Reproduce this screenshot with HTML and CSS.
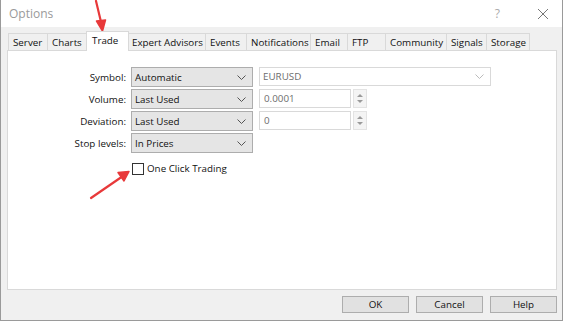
FILE: index.html
```html
<!DOCTYPE html>
<html>
<head>
<meta charset="utf-8">
<link rel="stylesheet" href="styles.css">
</head>
<body>
<div class="window">
  <div class="titlebar">
    <span class="title">Options</span>
    <span class="help">?</span>
    <span class="close">
      <svg width="12" height="12" viewBox="0 0 12 12"><path d="M1 1L11 11M11 1L1 11" stroke="#777" stroke-width="1"/></svg>
    </span>
  </div>
  <div class="body">
    <div class="tabs">
      <div class="tab t-server">Server</div>
      <div class="tab t-charts">Charts</div>
      <div class="tab active t-trade">Trade</div>
      <div class="tab t-ea">Expert Advisors</div>
      <div class="tab t-events">Events</div>
      <div class="tab t-notif">Notifications</div>
      <div class="tab t-email">Email</div>
      <div class="tab t-ftp">FTP</div>
      <div class="tab t-comm">Community</div>
      <div class="tab t-signals">Signals</div>
      <div class="tab t-storage">Storage</div>
    </div>
    <div class="panel">
      <div class="form">
        <div class="label">Symbol:</div>
        <div class="select"><span>Automatic</span><svg class="chev" width="9" height="5" viewBox="0 0 9 5"><path d="M0.5 0.5L4.5 4.5L8.5 0.5" fill="none" stroke="#555"/></svg></div>
        <div class="select wide disabled"><span>EURUSD</span><svg class="chev" width="9" height="5" viewBox="0 0 9 5"><path d="M0.5 0.5L4.5 4.5L8.5 0.5" fill="none" stroke="#bbb"/></svg></div>

        <div class="label">Volume:</div>
        <div class="select"><span>Last Used</span><svg class="chev" width="9" height="5" viewBox="0 0 9 5"><path d="M0.5 0.5L4.5 4.5L8.5 0.5" fill="none" stroke="#555"/></svg></div>
        <div class="numrow">
          <div class="input">0.0001</div>
          <div class="spin"><span class="up"></span><span class="down"></span></div>
        </div>

        <div class="label">Deviation:</div>
        <div class="select"><span>Last Used</span><svg class="chev" width="9" height="5" viewBox="0 0 9 5"><path d="M0.5 0.5L4.5 4.5L8.5 0.5" fill="none" stroke="#555"/></svg></div>
        <div class="numrow">
          <div class="input">0</div>
          <div class="spin"><span class="up"></span><span class="down"></span></div>
        </div>

        <div class="label">Stop levels:</div>
        <div class="select"><span>In Prices</span><svg class="chev" width="9" height="5" viewBox="0 0 9 5"><path d="M0.5 0.5L4.5 4.5L8.5 0.5" fill="none" stroke="#555"/></svg></div>
        <div></div>
      </div>
      <label class="check"><span class="box"></span><span>One Click Trading</span></label>
    </div>
    <div class="buttons">
      <div class="btn">OK</div>
      <div class="btn">Cancel</div>
      <div class="btn">Help</div>
    </div>
  </div>
  <svg class="arrows" width="563" height="321" viewBox="0 0 563 321">
    <path d="M95 1L100.5 24" stroke="#e8393a" stroke-width="2.2" stroke-linecap="round"/>
    <path d="M95.5 21L101.5 31L104.5 20Z" fill="#e8393a" stroke="#e8393a" stroke-width="1.5" stroke-linejoin="round"/>
    <path d="M90 198L122 176" stroke="#e8393a" stroke-width="2.2" stroke-linecap="round"/>
    <path d="M117 172.5L128 171.5L123 181Z" fill="#e8393a" stroke="#e8393a" stroke-width="1.5" stroke-linejoin="round"/>
  </svg>
</div>
</body>
</html>
```
FILE: styles.css
```css
* { box-sizing: border-box; }
html, body { margin: 0; padding: 0; background: #ffffff; }
body {
  font-family: "Open Sans", "Noto Sans", sans-serif;
  font-size: 9.8px;
  color: #111;
}
.window {
  position: relative;
  width: 563px;
  height: 321px;
  border-left: 1px solid #9a9a9a;
  border-right: 1px solid #9a9a9a;
  border-bottom: 1px solid #9a9a9a;
  background: #f0f0f0;
  display: flex;
  flex-direction: column;
  overflow: hidden;
}
.titlebar {
  height: 27px;
  background: #ffffff;
  display: flex;
  align-items: center;
  padding-left: 8px;
  flex: none;
}
.title { font-size: 12px; color: #9a9a9a; flex: 1; }
.help { color: #aaa; font-size: 12px; margin-right: 37px; }
.close { width: 12px; height: 12px; margin-right: 13px; display: flex; }
.body { flex: 1; display: flex; flex-direction: column; padding: 0 5px 0 6px; }
.tabs {
  display: flex;
  margin-top: 6px;
  padding-left: 1px;
  height: 17px;
  align-items: flex-end;
}
.tab {
  height: 17px;
  padding: 0 0 0 4px;
  border: 1px solid #d9d9d9;
  border-bottom: none;
  border-left: none;
  background: #f0f0f0;
  display: flex;
  align-items: center;
  white-space: nowrap;
}
.tab:first-child { border-left: 1px solid #d9d9d9; }
.t-server { width: 40px; }
.t-charts { width: 39px; }
.t-ea { width: 78px; }
.t-events { width: 41px; }
.t-notif { width: 64px; }
.t-email { width: 37px; }
.t-ftp { width: 38px; }
.t-comm { width: 61px; }
.t-signals { width: 40px; }
.t-storage { width: 43px; }
.tab.active {
  width: 43px;
  height: 20px;
  margin-bottom: -1px;
  background: #ffffff;
  border-left: 1px solid #d9d9d9;
  margin-left: -1px;
  margin-right: -1px;
  padding: 0 0 2px 5px;
  position: relative;
  z-index: 1;
}
.panel {
  height: 240px;
  background: #ffffff;
  border: 1px solid #d9d9d9;
  padding-top: 16px;
}
.form {
  display: grid;
  grid-template-columns: 118px 122px 233px;
  column-gap: 5px;
  row-gap: 2px;
  grid-auto-rows: 20px;
}
.form > :nth-child(3n) { margin-left: 1px; }
.label {
  text-align: right;
  align-self: center;
}
.select {
  border: 1px solid #adadad;
  background: #e5e5e5;
  display: flex;
  align-items: center;
  justify-content: space-between;
  padding: 0 6px 0 3px;
}
.select.disabled {
  background: #ffffff;
  border-color: #d9d9d9;
  color: #6d6d6d;
  height: 19px;
}
.chev { flex: none; }
.numrow { display: flex; gap: 2px; }
.input {
  width: 92px;
  height: 19px;
  border: 1px solid #d9d9d9;
  background: #fff;
  color: #6d6d6d;
  padding-left: 4px;
  display: flex;
  align-items: center;
}
.spin {
  width: 14px;
  height: 19px;
  border: 1px solid #e3e3e3;
  background: #f4f4f4;
  display: flex;
  flex-direction: column;
  align-items: center;
  justify-content: center;
  gap: 3px;
}
.up, .down { width: 0; height: 0; border-left: 3px solid transparent; border-right: 3px solid transparent; }
.up { border-bottom: 3px solid #9a9a9a; }
.down { border-top: 3px solid #9a9a9a; }
.check {
  display: flex;
  align-items: center;
  gap: 3px;
  margin-top: 9px;
  margin-left: 124px;
}
.box {
  width: 12px;
  height: 12px;
  border: 1px solid #333;
  background: #fff;
}
.buttons {
  display: flex;
  justify-content: flex-end;
  gap: 7px;
  margin-top: 6px;
}
.btn {
  width: 67px;
  height: 17px;
  border: 1px solid #adadad;
  background: #e1e1e1;
  display: flex;
  align-items: center;
  justify-content: center;
}
.arrows { position: absolute; left: 0; top: 0; pointer-events: none; }
```
